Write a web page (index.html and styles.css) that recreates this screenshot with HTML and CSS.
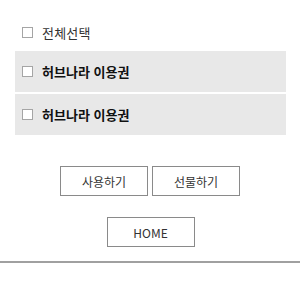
FILE: index.html
```html
<!DOCTYPE html>
<html lang="ko">
<head>
<meta charset="utf-8">
<link rel="stylesheet" href="styles.css">
</head>
<body>
<div class="page">
  <label class="select-all">
    <span class="box"></span>
    <span class="label">전체선택</span>
  </label>
  <div class="list">
    <label class="item">
      <span class="box"></span>
      <span class="name">허브나라 이용권</span>
    </label>
    <label class="item">
      <span class="box"></span>
      <span class="name">허브나라 이용권</span>
    </label>
  </div>
  <div class="actions">
    <button class="btn">사용하기</button>
    <button class="btn">선물하기</button>
  </div>
  <div class="home-row">
    <button class="btn">HOME</button>
  </div>
</div>
<div class="divider"></div>
</body>
</html>
```
FILE: styles.css
```css
html, body {
  margin: 0;
  padding: 0;
  background: #fff;
  font-family: "Noto Sans CJK KR", "Noto Sans", sans-serif;
  color: #222;
}
.page {
  padding: 18px 14px 0 15px;
}
.select-all {
  display: flex;
  align-items: center;
  height: 29px;
  padding-left: 7px;
  margin-bottom: 4px;
}
.box {
  width: 9px;
  height: 9px;
  border: 1px solid #a5a5a5;
  background: #fff;
  flex: none;
}
.select-all .label {
  margin-left: 9px;
  font-size: 13px;
  color: #333;
  letter-spacing: 0.2px;
}
.list {
  display: flex;
  flex-direction: column;
  gap: 2px;
}
.item {
  display: flex;
  align-items: center;
  height: 41px;
  padding-left: 7px;
  background: #e8e8e8;
}
.item .name {
  margin-left: 9px;
  font-size: 13px;
  font-weight: 700;
  color: #111;
}
.actions {
  display: flex;
  justify-content: center;
  gap: 4px;
  margin-top: 31px;
  margin-left: -15px;
  margin-right: -14px;
}
.home-row {
  display: flex;
  justify-content: center;
  margin-top: 21px;
  margin-left: -14px;
  margin-right: -14px;
}
.btn {
  width: 88px;
  height: 30px;
  border: 1px solid #8a8a8a;
  background: #fff;
  font-family: "Noto Sans CJK KR", "Noto Sans", sans-serif;
  font-size: 12px;
  color: #333;
  padding: 0;
}
.divider {
  margin-top: 14px;
  height: 2px;
  background: #a0a0a0;
}
```
